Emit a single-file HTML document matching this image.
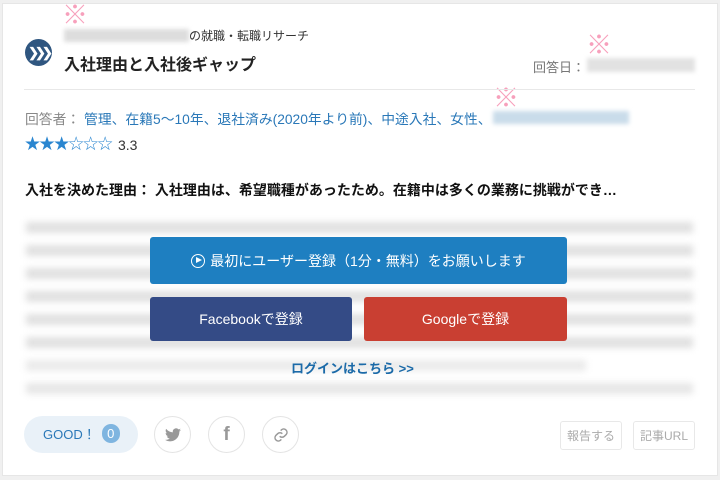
<!DOCTYPE html>
<html><head><meta charset="utf-8"><style>
*{margin:0;padding:0;box-sizing:border-box}
body{width:720px;height:480px;background:#f0f0f0;font-family:"Liberation Sans","Noto Sans CJK JP",sans-serif;position:relative;overflow:hidden}
.card{position:absolute;left:2px;top:3px;width:716px;height:473px;background:#fff;border:1px solid #e6e6e6}
.a{position:absolute;white-space:nowrap}
.kome{color:#f7a0bc;font-size:26px;line-height:24px;font-weight:bold;font-family:"Noto Sans CJK JP",sans-serif}
.blur{background:#ddd;filter:blur(2px);position:absolute}
.bl{position:absolute;left:26px;width:667px;height:11px;background:#d6d6d6;filter:blur(3.5px);opacity:.75}
.btn{position:absolute;color:#fff;font-size:14px;display:flex;align-items:center;justify-content:center;border-radius:3px}
.circ{position:absolute;top:416px;width:37px;height:37px;border:1px solid #e4e4e4;border-radius:50%;display:flex;align-items:center;justify-content:center}
.sb{position:absolute;top:421px;height:29px;border:1px solid #e8e8e8;border-radius:3px;color:#aaa;font-size:12px;display:flex;align-items:center;justify-content:center}
</style></head><body>
<div class="card"></div>
<div class="a kome" style="left:62px;top:2px">※</div>
<div class="a kome" style="left:586px;top:32px">※</div>
<div class="a kome" style="left:493px;top:85px">※</div>
<div class="a" style="left:25px;top:39px;width:27px;height:27px;border-radius:50%;background:#2f5680;color:#fff;font-size:13px;font-weight:bold;line-height:27px;text-align:center;letter-spacing:-4px">&#x276F;&#x276F;&#x276F;</div>
<div class="blur" style="left:64px;top:29px;width:125px;height:13px"></div>
<div class="a" style="left:189px;top:27px;font-size:12px;color:#333">の就職・転職リサーチ</div>
<div class="a" style="left:64px;top:51px;font-size:16px;font-weight:bold;color:#222">入社理由と入社後ギャップ</div>
<div class="a" style="left:533px;top:57px;font-size:13px;color:#777">回答日：</div>
<div class="blur" style="left:587px;top:58px;width:108px;height:14px;background:#e2e2e2"></div>
<div class="a" style="left:24px;top:89px;width:671px;height:1px;background:#e8e8e8"></div>
<div class="a" style="left:25px;top:108px;font-size:13.8px;color:#888">回答者： <span style="color:#2a78b8">管理、在籍5〜10年、退社済み(2020年より前)、中途入社、女性、</span></div>
<div class="blur" style="left:493px;top:111px;width:136px;height:13px;background:#c9dcea"></div>
<div class="a" style="left:24px;top:134px;font-size:19px;line-height:20px;color:#2a86d0;letter-spacing:-2.5px;font-family:'DejaVu Sans',sans-serif">★★★☆☆☆</div>
<div class="a" style="left:118px;top:137px;font-size:14px;color:#333">3.3</div>
<div class="a" style="left:25px;top:180px;font-size:14px;font-weight:bold;color:#111">入社を決めた理由： 入社理由は、希望職種があったため。在籍中は多くの業務に挑戦ができ…</div>
<div class="bl" style="top:222px"></div>
<div class="bl" style="top:245px"></div>
<div class="bl" style="top:268px"></div>
<div class="bl" style="top:291px"></div>
<div class="bl" style="top:314px"></div>
<div class="bl" style="top:337px"></div>
<div class="bl" style="top:360px;width:560px;opacity:.5"></div>
<div class="bl" style="top:383px;opacity:.6"></div>
<div class="btn" style="left:150px;top:237px;width:417px;height:47px;background:#1e7fc1;font-size:14px"><span style="display:inline-block;width:14px;height:14px;border:1.5px solid #fff;border-radius:50%;margin-right:5px;position:relative"><span style="position:absolute;left:4px;top:2.5px;border-left:6px solid #fff;border-top:3.5px solid transparent;border-bottom:3.5px solid transparent"></span></span>最初にユーザー登録（1分・無料）をお願いします</div>
<div class="btn" style="left:150px;top:297px;width:202px;height:44px;background:#344b86">Facebookで登録</div>
<div class="btn" style="left:364px;top:297px;width:203px;height:44px;background:#c93f32">Googleで登録</div>
<div class="a" style="left:291px;top:358px;font-size:13px;font-weight:bold;color:#1b6aa8">ログインはこちら &gt;&gt;</div>
<div class="a" style="left:24px;top:416px;width:114px;height:37px;border-radius:19px;background:#e9f1f8;font-size:13px;color:#2a78b8;line-height:37px;padding-left:19px">GOOD！<span style="display:inline-block;width:18px;height:19px;border-radius:9px;background:#7fb5e0;color:#fff;text-align:center;line-height:19px;margin-left:6px;vertical-align:1px">0</span></div>
<div class="circ" style="left:154px"><svg width="16" height="14" viewBox="0 0 24 20"><path fill="#999" d="M24 2.4a10 10 0 0 1-2.8.8A5 5 0 0 0 23.3.4a10 10 0 0 1-3.1 1.2A4.9 4.9 0 0 0 11.8 6 14 14 0 0 1 1.7.9a4.9 4.9 0 0 0 1.5 6.6A4.9 4.9 0 0 1 1 6.9a4.9 4.9 0 0 0 3.9 4.9 5 5 0 0 1-2.2.1 4.9 4.9 0 0 0 4.6 3.4A9.9 9.9 0 0 1 0 17.3 14 14 0 0 0 7.5 19.5c9.1 0 14-7.5 14-14v-.6A10 10 0 0 0 24 2.4z"/></svg></div>
<div class="circ" style="left:208px;font-size:19px;font-weight:bold;color:#999">f</div>
<div class="circ" style="left:262px"><svg width="16" height="16" viewBox="0 0 24 24" fill="none" stroke="#999" stroke-width="2.2"><path d="M10 14a5 5 0 0 0 7 0l3-3a5 5 0 0 0-7-7l-1.5 1.5"/><path d="M14 10a5 5 0 0 0-7 0l-3 3a5 5 0 0 0 7 7l1.5-1.5"/></svg></div>
<div class="sb" style="left:560px;width:62px">報告する</div>
<div class="sb" style="left:633px;width:62px">記事URL</div>
</body></html>
